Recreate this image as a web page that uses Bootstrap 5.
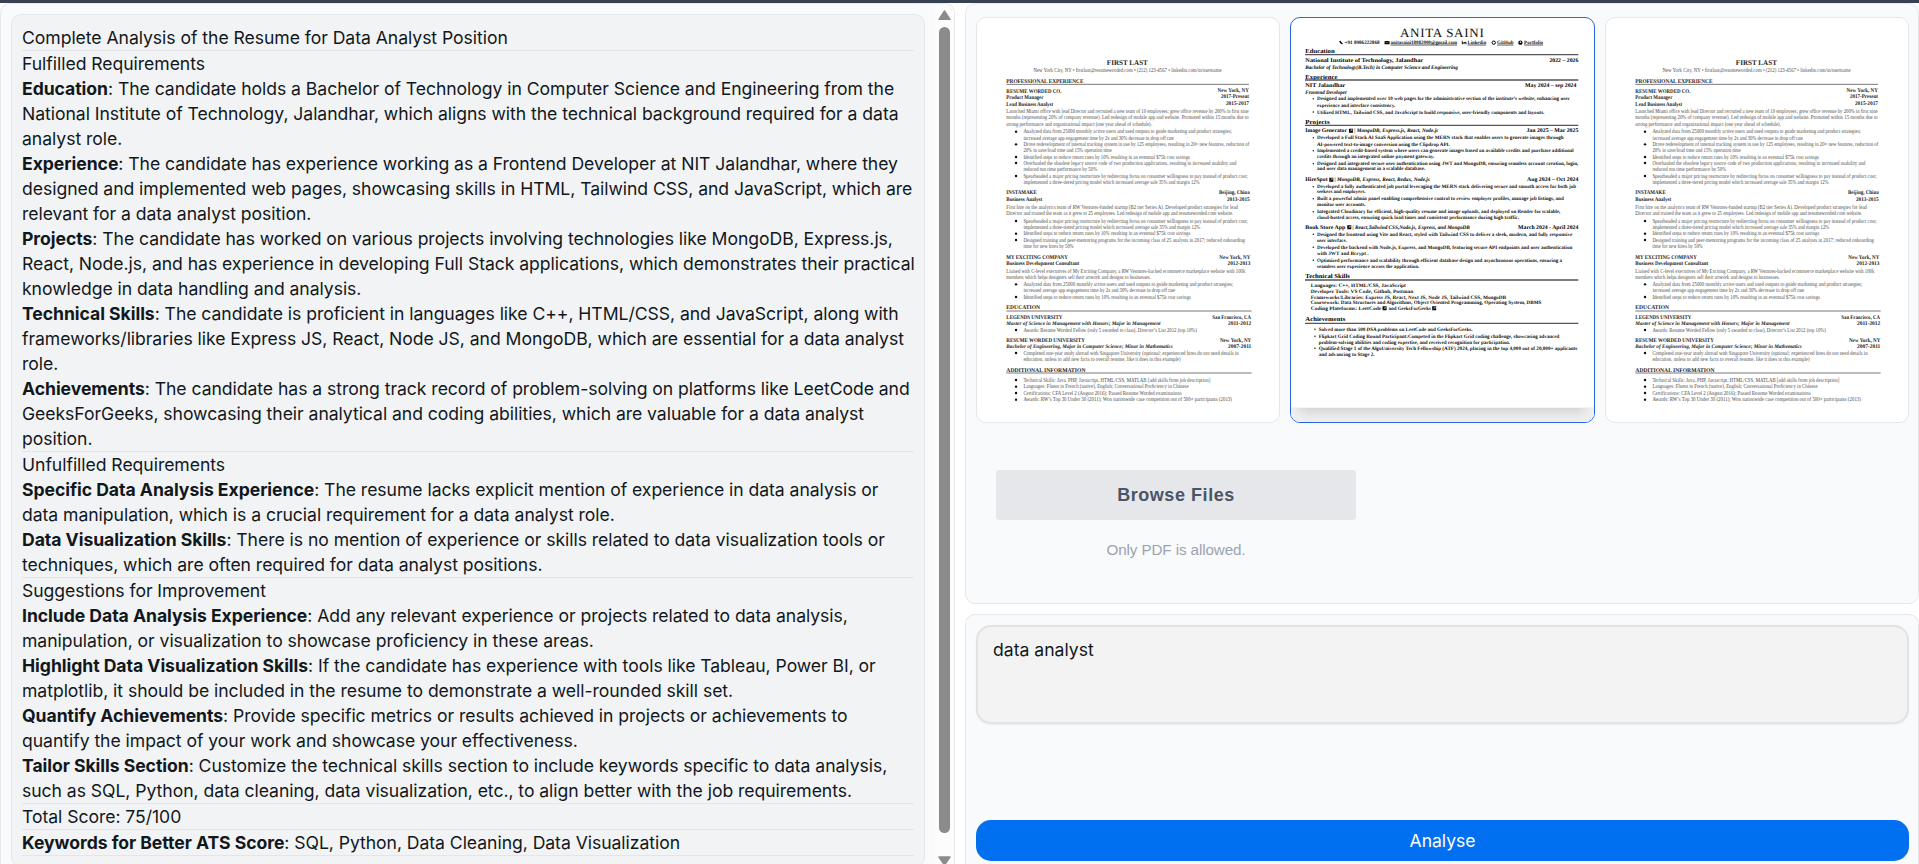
<!DOCTYPE html>
<html lang="en">
<head>
<meta charset="utf-8">
<meta name="viewport" content="width=device-width, initial-scale=1">
<title>Resume Analyser</title>
<link href="https://cdn.jsdelivr.net/npm/bootstrap@5.3.0/dist/css/bootstrap.min.css" rel="stylesheet">
<style>
body{font-family:Inter,"Liberation Sans",sans-serif;font-size:17.6px;line-height:25px;color:#11181c;background:#fff}
.app-shell{height:864px;border-top:3px solid #374151;gap:10px}
.panel{background:#f9fafc;border:1px solid #e5e7eb;border-radius:10px}
.panel-left{width:955px;padding:10px 0 0 10px}
.report{width:914px;height:853px;background:#f2f3f5;border:1px solid #e5e7eb;border-radius:10px;padding:10px 10px 0;white-space:nowrap;letter-spacing:-.048px}
.report section{border-bottom:1px solid #e3e5e9}
.report p{margin:0}
.report b{font-weight:700}
.rail{width:19px;background:#fcfcfc;margin-top:-10px}
.rail-thumb{width:11px;height:806px;border-radius:6px;background:#8b8b8b}
.side{width:954px;gap:10px}
.upload{height:601px;padding:13px 9px 10px 10px}
.prompt-box{height:250px;padding:10px 9px 0 10px;border-bottom:0;border-radius:10px 10px 0 0}
.thumbs{display:grid;grid-template-columns:repeat(3,1fr);gap:10px;height:406px;width:933px}
.thumb{border:1px solid #e5e7eb;border-radius:10px;background:#fff;overflow:hidden}
.thumb.active{border-color:#2563eb}
.thumb svg{display:block;width:100%;height:100%;font-family:"Liberation Serif",serif;text-rendering:geometricPrecision}
.browse-col{width:360px;margin:47px 0 0 20px;font-family:"Liberation Sans",Arial,sans-serif}
.browse{height:50px;background:#e5e7eb;border-radius:4px;color:#4b5563;font-weight:700;font-size:18px;letter-spacing:.55px}
.hint{color:#9ca3af;font-size:15.2px;letter-spacing:-.1px;margin-top:17px}
.prompt{width:933px;height:99px;resize:none;background:#f3f3f3;border:2px solid #e2e3e5;border-radius:15px;padding:10px 15px;box-shadow:0 1px 2px rgba(0,0,0,.06);outline:0;color:#11181c;line-height:25px}
.analyse{width:933px;height:41px;margin-top:96px;border-radius:15px;background:#006ff0;color:#fff;border:0;font-size:17.6px;letter-spacing:-.05px}
</style>
</head>
<body class="overflow-hidden">
<main class="app-shell d-flex overflow-hidden">
  <div class="panel panel-left d-flex overflow-hidden flex-shrink-0 border-bottom-0 rounded-bottom-0">
    <article class="report flex-shrink-0">
      <section><p>Complete Analysis of the Resume for Data Analyst Position</p></section>
      <section>
        <p>Fulfilled Requirements</p>
        <p><b>Education</b>: The candidate holds a Bachelor of Technology in Computer Science and Engineering from the<br>National Institute of Technology, Jalandhar, which aligns with the technical background required for a data<br>analyst role.</p>
        <p><b>Experience</b>: The candidate has experience working as a Frontend Developer at NIT Jalandhar, where they<br>designed and implemented web pages, showcasing skills in HTML, Tailwind CSS, and JavaScript, which are<br>relevant for a data analyst position.</p>
        <p><b>Projects</b>: The candidate has worked on various projects involving technologies like MongoDB, Express.js,<br>React, Node.js, and has experience in developing Full Stack applications, which demonstrates their practical<br>knowledge in data handling and analysis.</p>
        <p><b>Technical Skills</b>: The candidate is proficient in languages like C++, HTML/CSS, and JavaScript, along with<br>frameworks/libraries like Express JS, React, Node JS, and MongoDB, which are essential for a data analyst<br>role.</p>
        <p><b>Achievements</b>: The candidate has a strong track record of problem-solving on platforms like LeetCode and<br>GeeksForGeeks, showcasing their analytical and coding abilities, which are valuable for a data analyst<br>position.</p>
      </section>
      <section>
        <p>Unfulfilled Requirements</p>
        <p><b>Specific Data Analysis Experience</b>: The resume lacks explicit mention of experience in data analysis or<br>data manipulation, which is a crucial requirement for a data analyst role.</p>
        <p><b>Data Visualization Skills</b>: There is no mention of experience or skills related to data visualization tools or<br>techniques, which are often required for data analyst positions.</p>
      </section>
      <section>
        <p>Suggestions for Improvement</p>
        <p><b>Include Data Analysis Experience</b>: Add any relevant experience or projects related to data analysis,<br>manipulation, or visualization to showcase proficiency in these areas.</p>
        <p><b>Highlight Data Visualization Skills</b>: If the candidate has experience with tools like Tableau, Power BI, or<br>matplotlib, it should be included in the resume to demonstrate a well-rounded skill set.</p>
        <p><b>Quantify Achievements</b>: Provide specific metrics or results achieved in projects or achievements to<br>quantify the impact of your work and showcase your effectiveness.</p>
        <p><b>Tailor Skills Section</b>: Customize the technical skills section to include keywords specific to data analysis,<br>such as SQL, Python, data cleaning, data visualization, etc., to align better with the job requirements.</p>
      </section>
      <section><p>Total Score: 75/100</p></section>
      <section><p><b>Keywords for Better ATS Score</b>: SQL, Python, Data Cleaning, Data Visualization</p></section>
    </article>
    <div class="rail ms-auto d-flex flex-column align-items-center flex-shrink-0">
      <svg class="flex-shrink-0" width="13" height="23" viewBox="0 0 13 23"><path d="M6.5 7 L12 15.300 H1Z" fill="#8b8b8b" stroke="#8b8b8b" stroke-width="1.4" stroke-linejoin="round"/></svg>
      <div class="rail-thumb flex-shrink-0"></div>
      <svg class="flex-shrink-0" width="13" height="31" viewBox="0 0 13 31"><path d="M6.5 32 L12 24 H1Z" fill="#8b8b8b" stroke="#8b8b8b" stroke-width="1.4" stroke-linejoin="round"/></svg>
    </div>
  </div>
  <div class="side d-flex flex-column flex-shrink-0">
    <section class="panel upload flex-shrink-0">
      <div class="thumbs">
        <div class="thumb"><svg data-doc="sample" viewBox="22 25 906 1212" preserveAspectRatio="none"></svg></div>
        <div class="thumb active"><svg data-doc="anita" viewBox="19 25 908 1212" preserveAspectRatio="none"></svg></div>
        <div class="thumb"><svg data-doc="sample" viewBox="22 25 906 1212" preserveAspectRatio="none"></svg></div>
      </div>
      <div class="browse-col text-center">
        <div class="browse d-flex align-items-center justify-content-center">Browse Files</div>
        <div class="hint">Only PDF is allowed.</div>
      </div>
    </section>
    <section class="panel prompt-box flex-shrink-0">
      <textarea class="prompt d-block">data analyst</textarea>
      <button class="analyse d-block p-0">Analyse</button>
    </section>
  </div>
</main>
<script src="https://cdn.jsdelivr.net/npm/bootstrap@5.3.0/dist/js/bootstrap.bundle.min.js"></script>
<script>
// Each text row: [left, right, baseline, text, style]; b = bold, i = bold italic, d = bullet before it, t = title
const docs = {
 sample: {fill:'#4a4a4a', bold:'#222', size:18, bulletX:139, rules:[[110,837,224],[110,845,904],[110,845,1090]], rows:[
  [411,534,165,'FIRST LAST','t'],
  [191,755,187,'New York City, NY • firstlast@resumeworded.com • (212) 123-4567 • linkedin.com/in/username'],
  [110,341,221,'PROFESSIONAL EXPERIENCE','b'],
  [110,275,249,'RESUME WORDED CO.','b'],[743,837,248,'New York, NY','b'],
  [110,221,269,'Product Manager','b'],[753,837,266,'2017-Present','b'],
  [110,250,288,'Lead Business Analyst','b'],[768,837,286,'2015-2017','b'],
  [110,836,309,'Launched Miami office with lead Director and recruited a new team of 10 employees; grew office revenue by 200% in first nine'],
  [110,836,329,'months (representing 20% of company revenue). Led redesign of mobile app and website. Promoted within 15 months due to'],
  [110,546,348,'strong performance and organizational impact (one year ahead of schedule).'],
  [161,786,371,'Analyzed data from 25000 monthly active users and used outputs to guide marketing and product strategies;','d'],
  [161,612,390,'increased average app engagement time by 2x and 30% decrease in drop off rate'],
  [161,838,409,'Drove redevelopment of internal tracking system in use by 125 employees, resulting in 20+ new features, reduction of','d'],
  [161,426,428,'20% in save/load time and 15% operation time'],
  [161,660,447,'Identified steps to reduce return rates by 10% resulting in an eventual $75k cost savings','d'],
  [161,799,465,'Overhauled the obsolete legacy source code of two production applications, resulting in increased usability and','d'],
  [161,382,485,'reduced run time performance by 50%'],
  [161,833,504,'Spearheaded a major pricing restructure by redirecting focus on consumer willingness to pay instead of product cost;','d'],
  [161,689,522,'implemented a three-tiered pricing model which increased average sale 35% and margin 12%'],
  [110,201,554,'INSTAMAKE','b'],[747,839,554,'Beijing, China','b'],
  [110,217,574,'Business Analyst','b'],[771,839,573,'2013-2015','b'],
  [110,804,597,'First hire on the analytics team of RW Ventures-funded startup (B2 tier Series A). Developed product strategies for lead'],
  [110,790,616,'Director and trained the team as it grew to 25 employees. Led redesign of mobile app and resumeworded.com website.'],
  [161,833,639,'Spearheaded a major pricing restructure by redirecting focus on consumer willingness to pay instead of product cost;','d'],
  [161,691,658,'implemented a three-tiered pricing model which increased average sale 35% and margin 12%'],
  [161,661,677,'Identified steps to reduce return rates by 10% resulting in an eventual $75k cost savings','d'],
  [161,825,696,'Designed training and peer-mentoring programs for the incoming class of 25 analysts in 2017; reduced onboarding','d'],
  [161,312,716,'time for new hires by 50%'],
  [110,294,747,'MY EXCITING COMPANY','b'],[748,841,747,'New York, NY','b'],
  [110,328,767,'Business Development Consultant','b'],[773,841,766,'2012-2013','b'],
  [110,826,790,'Liaised with C-level executives of My Exciting Company, a RW Ventures-backed ecommerce marketplace website with 100k'],
  [110,543,809,'members which helps designers sell their artwork and designs to businesses.'],
  [161,790,829,'Analyzed data from 25000 monthly active users and used outputs to guide marketing and product strategies;','d'],
  [161,616,848,'increased average app engagement time by 2x and 30% decrease in drop off rate'],
  [161,663,867,'Identified steps to reduce return rates by 10% resulting in an eventual $75k cost savings','d'],
  [110,211,898,'EDUCATION','b'],
  [110,278,928,'LEGENDS UNIVERSITY','b'],[727,843,928,'San Francisco, CA','b'],
  [110,572,947,'Master of Science in Management with Honors; Major in Management','i'],[774,844,947,'2011-2012','b'],
  [161,681,966,'Awards: Resume Worded Fellow (only 5 awarded to class), Director’s List 2012 (top 10%)','d'],
  [110,345,997,'RESUME WORDED UNIVERSITY','b'],[750,844,997,'New York, NY','b'],
  [110,609,1016,'Bachelor of Engineering, Major in Computer Science; Minor in Mathematics','i'],[774,844,1016,'2007-2011','b'],
  [161,806,1035,'Completed one-year study abroad with Singapore University (optional; experienced hires do not need details in','d'],
  [161,632,1054,'education, unless to add new facts to overall resume, like it does in this example)'],
  [110,347,1086,'ADDITIONAL INFORMATION','b'],
  [161,721,1116,'Technical Skills: Java, PHP, Javascript, HTML/CSS, MATLAB [add skills from job description]','d'],
  [161,656,1136,'Languages: Fluent in French (native), English; Conversational Proficiency in Chinese','d'],
  [161,635,1155,'Certifications: CFA Level 2 (August 2016); Passed Resume Worded examinations','d'],
  [161,786,1175,'Awards: RW’s Top 30 Under 30 (2011); Won nationwide case competition out of 500+ participants (2013)','d']
 ]},
 anita: {fill:'#111', bold:'#000', size:15.5, weight:700, bulletX:86, rules:[[61,882,135],[61,882,211],[61,882,347],[61,882,811],[61,882,941]], rows:[
  [346,600,81,'ANITA SAINI','h'],
  [180,285,103,'+91 8986222868'],[318,518,103,'anitasaini18082000@gmail.com','u'],[549,605,103,'Linkedin','u'],[638,687,103,'GitHub','u'],[719,776,103,'Portfolio','u'],
  [62,150,129,'Education','s'],
  [62,416,156,'National Institute of Technology, Jalandhar','b'],[795,882,156,'2022 – 2026','b'],
  [62,520,177,'Bachelor of Technology(B.Tech) in Computer Science and Engineering','i'],
  [62,159,207,'Experience','s'],
  [62,182,231,'NIT Jalandhar','b'],[722,876,231,'May 2024 – sep 2024','b'],
  [62,187,252,'Frontend Developer','i'],
  [97,856,272,'Designed and implemented over 10 web pages for the administrative section of the institute’s website, enhancing user','d'],
  [97,332,291,'experience and interface consistency.'],
  [97,780,312,'Utilized HTML, Tailwind CSS, and JavaScript to build responsive, user-friendly components and layouts.','d'],
  [62,135,342,'Projects','s'],
  [62,187,368,'Image Generator','b'],[209,461,368,'| MongoDB, Express.js, React, Node.js','i'],[726,882,368,'Jan 2025 – Mar 2025','b'],
  [97,838,389,'Developed a Full Stack AI SaaS Application using the MERN stack that enables users to generate images through','d'],
  [97,496,408,'AI-powered text-to-image conversion using the Clipdrop API.'],
  [97,868,428,'Implemented a credit-based system where users can generate images based on available credits and purchase additional','d'],
  [97,449,446,'credits through an integrated online payment gateway.'],
  [97,882,467,'Designed and integrated secure user authentication using JWT and MongoDB, ensuring seamless account creation, login,','d'],
  [97,422,482,'and user data management in a scalable database.'],
  [62,129,515,'HireSpot','b'],[150,436,515,'| MongoDB, Express, React, Redux, Node.js','i'],[728,882,515,'Aug 2024 – Oct 2024','b'],
  [97,875,536,'Developed a fully authenticated job portal leveraging the MERN stack delivering secure and smooth access for both job','d'],
  [97,243,551,'seekers and employers.'],
  [97,838,572,'Built a powerful admin panel enabling comprehensive control to review employer profiles, manage job listings, and','d'],
  [97,243,590,'monitor user accounts.'],
  [97,828,611,'Integrated Cloudinary for efficient, high-quality resume and image uploads, and deployed on Render for scalable,','d'],
  [97,704,628,'cloud-hosted access, ensuring quick load times and consistent performance during high traffic.'],
  [62,182,658,'Book Store App','b'],[204,556,658,'| React,Tailwind CSS,Node.js, Express, and MongoDB','i'],[701,882,658,'March 2024 - April 2024','b'],
  [97,864,679,'Designed the frontend using Vite and React, styled with Tailwind CSS to deliver a sleek, modern, and fully responsive','d'],
  [97,187,697,'user interface.'],
  [97,864,718,'Developed the backend with Node.js, Express, and MongoDB, featuring secure API endpoints and user authentication','d'],
  [97,252,737,'with JWT and Bcrypt .'],
  [97,833,757,'Optimized performance and scalability through efficient database design and asynchronous operations, ensuring a','d'],
  [97,404,775,'seamless user experience across the application.'],
  [62,196,805,'Technical Skills','s'],
  [78,364,832,'Languages: C++, HTML/CSS, JavaScript'],
  [78,386,850,'Developer Tools: VS Code, Github, Postman'],
  [78,665,868,'Frameworks/Libraries: Express JS, React, Next JS, Node JS, Tailwind CSS, MongoDB'],
  [78,771,883,'Coursework: Data Structures and Algorithms, Object Oriented Programming, Operating System, DBMS'],
  [78,290,901,'Coding Plateforms: LeetCode'],[312,439,901,'and GeeksForGeeks'],
  [62,182,934,'Achievements','s'],
  [102,564,964,'Solved more than 500 DSA problems on LeetCode and GeeksForGeeks.','e'],
  [102,825,985,'Flipkart Grid Coding Round Participant:Competed in the Flipkart Grid coding challenge, showcasing advanced','e'],
  [102,677,1003,'problem-solving abilities and coding expertise, and received recognition for participation.'],
  [102,879,1021,'Qualified Stage 1 of the AlgoUniversity Tech Fellowship (ATF) 2024, placing in the top 4,000 out of 20,000+ applicants','e'],
  [102,270,1039,'and advancing to Stage 2.']
 ], extra:`
  <defs><linearGradient id="fade" x1="0" y1="0" x2="0" y2="1"><stop offset="0" stop-color="#d5d6d8"/><stop offset=".5" stop-color="#e6e7e8"/><stop offset="1" stop-color="#eff0f0"/></linearGradient>
  <linearGradient id="edge"><stop offset="0" stop-color="#f1f1f1"/><stop offset=".06" stop-color="#f1f1f1" stop-opacity="0"/><stop offset=".94" stop-color="#f1f1f1" stop-opacity="0"/><stop offset="1" stop-color="#f1f1f1"/></linearGradient></defs>
  <path d="M16 1194h914v46H16z" fill="url(#fade)"/><path d="M16 1194h914v46H16z" fill="url(#edge)"/>
  <path d="M164 94l4-1 2 4 3 3 2 3-3 1q-8-3-8-10z"/><path d="M300 94h15v10h-15z"/><path d="M300 95l7.500 5 7.500-5" stroke="#fff" fill="none"/>
  <path d="M532 97h3v7h-3zM532 93h3v3h-3zM537 97h3l3-1 3 3v5h-3v-5h-3v5h-3z"/>
  <circle cx="628" cy="99" r="5" fill="none" stroke="#000" stroke-width="3"/>
  <circle cx="708" cy="99" r="6.500"/><path d="M705 97l4-2 2 3-3 2z" fill="#fff"/>
  ${[[193,357],[134,504],[188,647],[294,890],[443,890]].map(([x,y])=>`<path d="M${x} ${y}h12v12h-12z"/><path d="M${x+3} ${y+9}l6-6m-4 0h4v4" stroke="#fff" stroke-width="1.500" fill="none"/>`).join('')}`}
};
document.querySelectorAll('svg[data-doc]').forEach(svg => {
  const d = docs[svg.dataset.doc];
  const sizes = {t:22, h:38, s:18.5, b:17, i:16.5};
  svg.innerHTML = d.rows.map(([x, r, y, s, k]) => {
    const strong = 'bits'.includes(k || '-');
    const bx = k === 'e' ? 91 : d.bulletX;
    return (k === 'd' || k === 'e' ? `<circle cx="${bx}" cy="${y-5}" r="${d.weight ? 2.2 : 3.6}" fill="#111"/>` : '') +
      (k === 'u' ? `<path d="M${x} ${y+3}H${r}" stroke="#000" stroke-width="2"/>` : '') +
      `<text transform="translate(${x} ${y})" font-size="${sizes[k] || d.size}" fill="${strong ? d.bold : d.fill}" font-weight="${k === 'h' ? 400 : strong ? 700 : d.weight || 400}"${k === 'h' ? ' letter-spacing="2"' : ''}${k === 'i' ? ' font-style="italic"' : ''}>${s}</text>`;
  }).join('') + d.rules.map(([a, b, y]) => `<path d="M${a} ${y}H${b}" stroke="#55555a" stroke-width="${d.weight ? 4 : 2.4}"/>`).join('') + (d.extra || '');
  // Fit each row to its column width
  svg.querySelectorAll('text').forEach((t, i) => {
    const [x, r, y] = d.rows[i];
    t.setAttribute('transform', `translate(${x} ${y}) scale(${((r - x) / t.getComputedTextLength()).toFixed(4)} 1)`);
  });
});
</script>
</body>
</html>
